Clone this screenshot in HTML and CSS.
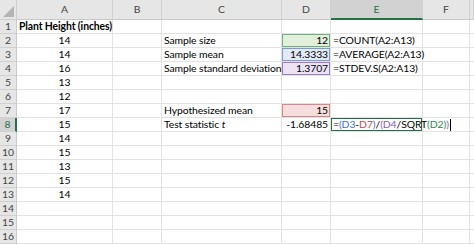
FILE: index.html
```html
<!DOCTYPE html>
<html>
<head>
<meta charset="utf-8">
<link rel="stylesheet" href="styles.css">
</head>
<body>
<div class="sheet">
  <div class="corner"><span class="tri"></span></div>
  <div class="ch">A</div><div class="ch">B</div><div class="ch">C</div><div class="ch">D</div><div class="ch sel">E</div><div class="ch">F</div><div class="ch"></div>

  <div class="rh">1</div><div class="c bold">Plant Height (inches)</div><div class="c"></div><div class="c"></div><div class="c"></div><div class="c"></div><div class="c"></div><div class="c"></div>
  <div class="rh">2</div><div class="c ctr">14</div><div class="c"></div><div class="c">Sample size</div><div class="c num hl-g">12</div><div class="c">=COUNT(A2:A13)</div><div class="c"></div><div class="c"></div>
  <div class="rh">3</div><div class="c ctr">14</div><div class="c"></div><div class="c">Sample mean</div><div class="c num hl-b">14.3333</div><div class="c">=AVERAGE(A2:A13)</div><div class="c"></div><div class="c"></div>
  <div class="rh">4</div><div class="c ctr">16</div><div class="c"></div><div class="c">Sample standard deviation</div><div class="c num hl-p">1.3707</div><div class="c">=STDEV.S(A2:A13)</div><div class="c"></div><div class="c"></div>
  <div class="rh">5</div><div class="c ctr">13</div><div class="c"></div><div class="c"></div><div class="c"></div><div class="c"></div><div class="c"></div><div class="c"></div>
  <div class="rh">6</div><div class="c ctr">12</div><div class="c"></div><div class="c"></div><div class="c"></div><div class="c"></div><div class="c"></div><div class="c"></div>
  <div class="rh">7</div><div class="c ctr">17</div><div class="c"></div><div class="c">Hypothesized mean</div><div class="c num hl-r">15</div><div class="c"></div><div class="c"></div><div class="c"></div>
  <div class="rh rsel">8</div><div class="c ctr">15</div><div class="c"></div><div class="c">Test statistic <i>t</i></div><div class="c num">-1.68485</div><div class="c active">=<span class="k-b">(D3</span>-<span class="k-r">D7</span><span class="k-b">)</span>/<span class="k-p">(D4</span>/SQRT<span class="k-g">(D2)</span><span class="k-p">)</span><span class="cur"></span></div><div class="c"></div><div class="c"></div>
  <div class="rh">9</div><div class="c ctr">14</div><div class="c"></div><div class="c"></div><div class="c"></div><div class="c"></div><div class="c"></div><div class="c"></div>
  <div class="rh">10</div><div class="c ctr">15</div><div class="c"></div><div class="c"></div><div class="c"></div><div class="c"></div><div class="c"></div><div class="c"></div>
  <div class="rh">11</div><div class="c ctr">13</div><div class="c"></div><div class="c"></div><div class="c"></div><div class="c"></div><div class="c"></div><div class="c"></div>
  <div class="rh">12</div><div class="c ctr">15</div><div class="c"></div><div class="c"></div><div class="c"></div><div class="c"></div><div class="c"></div><div class="c"></div>
  <div class="rh">13</div><div class="c ctr">14</div><div class="c"></div><div class="c"></div><div class="c"></div><div class="c"></div><div class="c"></div><div class="c"></div>
  <div class="rh">14</div><div class="c"></div><div class="c"></div><div class="c"></div><div class="c"></div><div class="c"></div><div class="c"></div><div class="c"></div>
  <div class="rh">15</div><div class="c"></div><div class="c"></div><div class="c"></div><div class="c"></div><div class="c"></div><div class="c"></div><div class="c"></div>
  <div class="rh">16</div><div class="c"></div><div class="c"></div><div class="c"></div><div class="c"></div><div class="c"></div><div class="c"></div><div class="c"></div>
</div>
</body>
</html>
```

FILE: styles.css
```css
html, body {
  margin: 0;
  padding: 0;
  background: #ffffff;
  overflow: hidden;
}
.sheet {
  display: grid;
  grid-template-columns: 17px 96px 49px 120px 49px 92px 47px 4px;
  grid-template-rows: 20px repeat(16, 14px);
  width: 474px;
  font-family: Lato, "Open Sans", sans-serif;
  font-size: 10.4px;
  letter-spacing: -0.1px;
  color: #000;
}
.sheet > div {
  box-sizing: border-box;
  border-right: 1px solid #e2e2e2;
  border-bottom: 1px solid #e2e2e2;
  white-space: nowrap;
  line-height: 13px;
  position: relative;
}
.corner {
  background: #e6e6e6;
  border-right: 1px solid #cfcfcf !important;
  border-bottom: 1px solid #cfcfcf !important;
}
.tri {
  position: absolute;
  right: 2px;
  bottom: 2px;
  width: 0;
  height: 0;
  border-left: 11px solid transparent;
  border-bottom: 11px solid #b4b4b4;
}
.ch {
  background: #e6e6e6;
  color: #444;
  text-align: center;
  line-height: 19px !important;
  border-right: 1px solid #d0d0d0 !important;
  border-bottom: 1px solid #c8c8c8 !important;
}
.ch.sel {
  background: #d2d2d2;
  color: #217346;
  border-bottom: 2px solid #217346 !important;
}
.rh {
  background: #e6e6e6;
  color: #444;
  text-align: center;
  letter-spacing: 0;
  border-right: 1px solid #c8c8c8 !important;
  border-bottom: 1px solid #d0d0d0 !important;
}
.rh.rsel {
  background: #d2d2d2;
  color: #217346;
  border-right: 2px solid #217346 !important;
}
.c {
  padding: 0 2px;
}
.bold { font-weight: bold; overflow: visible; z-index: 1; }
.ctr { text-align: center; }
.num { text-align: right; }
.hl-g { background: #e2efda; box-shadow: inset 0 0 0 1px #6fb07f; }
.hl-b { background: #e3eaf7; box-shadow: inset 0 0 0 1px #7a9bd6; }
.hl-p { background: #ece3f5; box-shadow: inset 0 0 0 1px #9c7bc8; }
.hl-r { background: #f6dede; box-shadow: inset 0 0 0 1px #d98686; }
.active {
  box-shadow: inset 0 0 0 1px #217346;
  overflow: visible;
  z-index: 1;
}
.k-b { color: #3a6fc7; }
.k-r { color: #c8474a; }
.k-p { color: #8a5cbf; }
.k-g { color: #2e8a4a; }
.cur {
  display: inline-block;
  width: 1px;
  height: 12px;
  background: #000;
  vertical-align: middle;
  margin-left: 1px;
}
i { font-style: italic; }
```
